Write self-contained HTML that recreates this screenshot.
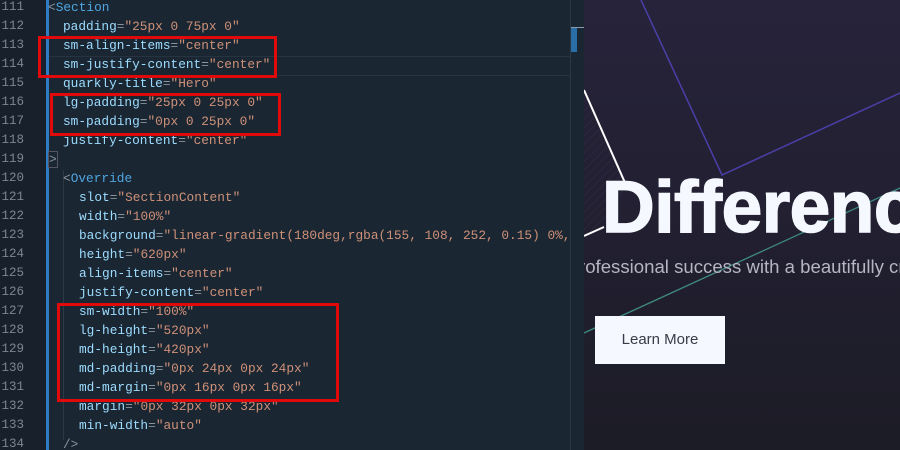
<!DOCTYPE html>
<html><head><style>
body{margin:0;width:900px;height:450px;overflow:hidden;background:#1b2633;position:relative;font-family:"Liberation Mono",monospace}
.gut{position:absolute;left:0;top:0;width:46px;height:450px;background:#18212b}
.bar{position:absolute;left:46px;top:0;width:3px;height:450px;background:#2f7bc4}
.ln{position:absolute;left:0;width:24px;text-align:right;color:#7d8690;font-size:12.5px}
.c{position:absolute;font-size:12.8px;white-space:pre;color:#ce9178}
.a{color:#9cdcfe}.e{color:#8a949e}.t{color:#4fa6e0}
.box{position:absolute;border:3px solid #e00a0a;box-sizing:border-box}
.pv{position:absolute;left:584px;top:0;width:316px;height:450px;background:linear-gradient(180deg,#27233b,#1c1c26);overflow:hidden}
#code{position:absolute;left:0;top:0;width:570px;height:450px;overflow:hidden}
</style></head><body>
<div class="gut"></div><div class="bar"></div>
<div style="position:absolute;left:49px;top:56px;width:521px;height:18px;border-top:1px solid #263340;border-bottom:1px solid #263340"></div>
<div style="position:absolute;left:570px;top:0;width:1px;height:450px;background:#2a3845"></div>
<div style="position:absolute;left:571px;top:27px;width:6px;height:25px;background:#2a6ea8"></div>
<div style="position:absolute;left:571px;top:27px;width:13px;height:1px;background:#8a9bb0"></div>
<div style="position:absolute;left:63px;top:170px;width:1px;height:270px;background:#2c3a48"></div>

<div id="code"></div>
<script>
const L=[
[48,'<span class="e">&lt;</span><span class="t">Section</span>'],
[63,'<span class="a">padding</span><span class="e">=</span>"25px 0 75px 0"'],
[63,'<span class="a">sm-align-items</span><span class="e">=</span>"center"'],
[63,'<span class="a">sm-justify-content</span><span class="e">=</span>"center"'],
[63,'<span class="a">quarkly-title</span><span class="e">=</span>"Hero"'],
[63,'<span class="a">lg-padding</span><span class="e">=</span>"25px 0 25px 0"'],
[63,'<span class="a">sm-padding</span><span class="e">=</span>"0px 0 25px 0"'],
[63,'<span class="a">justify-content</span><span class="e">=</span>"center"'],
[48,'<span class="e" style="border:1px solid #556;">&gt;</span>'],
[63,'<span class="e">&lt;</span><span class="t">Override</span>'],
[79,'<span class="a">slot</span><span class="e">=</span>"SectionContent"'],
[79,'<span class="a">width</span><span class="e">=</span>"100%"'],
[79,'<span class="a">background</span><span class="e">=</span>"linear-gradient(180deg,rgba(155, 108, 252, 0.15) 0%,tr'],
[79,'<span class="a">height</span><span class="e">=</span>"620px"'],
[79,'<span class="a">align-items</span><span class="e">=</span>"center"'],
[79,'<span class="a">justify-content</span><span class="e">=</span>"center"'],
[79,'<span class="a">sm-width</span><span class="e">=</span>"100%"'],
[79,'<span class="a">lg-height</span><span class="e">=</span>"520px"'],
[79,'<span class="a">md-height</span><span class="e">=</span>"420px"'],
[79,'<span class="a">md-padding</span><span class="e">=</span>"0px 24px 0px 24px"'],
[79,'<span class="a">md-margin</span><span class="e">=</span>"0px 16px 0px 16px"'],
[79,'<span class="a">margin</span><span class="e">=</span>"0px 32px 0px 32px"'],
[79,'<span class="a">min-width</span><span class="e">=</span>"auto"'],
[63,'<span class="e">/&gt;</span>']];
let h='';L.forEach((l,i)=>{const y=i*19;h+=`<div class="ln" style="top:${y}px">${111+i}</div><div class="c" style="left:${l[0]}px;top:${y}px">${l[1]}</div>`});
document.getElementById('code').innerHTML=h;
</script>
<div class="box" style="left:38px;top:36px;width:239px;height:42px"></div>
<div class="box" style="left:50px;top:93px;width:231px;height:43px"></div>
<div class="box" style="left:57px;top:303px;width:282px;height:99px"></div>

<div class="pv">
<svg width="316" height="450" style="position:absolute;left:0;top:0">
<defs><pattern id="h" width="6" height="6" patternUnits="userSpaceOnUse" patternTransform="rotate(45)"><line x1="0" y1="0" x2="0" y2="6" stroke="#3a3550" stroke-width="1"/></pattern></defs>
<polygon points="0,90 42,185 20,227 0,236" fill="url(#h)" opacity="0.6"/>
<polyline points="0,90 42,185" stroke="#fff" stroke-width="2" fill="none"/>
<polyline points="0,236 20,227" stroke="#fff" stroke-width="2" fill="none"/>
<polyline points="57,0 138,175 316,93" stroke="#4a3fa8" stroke-width="1.5" fill="none"/>
<line x1="0" y1="333" x2="316" y2="188" stroke="#3f8a82" stroke-width="1.3"/>
</svg>
<div style="position:absolute;left:18px;top:166px;font:bold 73px 'Liberation Sans',sans-serif;color:#f6f8ff;white-space:nowrap;letter-spacing:-0.5px;-webkit-text-stroke:1.5px #f6f8ff">Differenc</div>
<div style="position:absolute;left:-5px;top:256px;font:18.6px 'Liberation Sans',sans-serif;color:#b5b5c3;white-space:nowrap">rofessional success with a beautifully cr</div>
<div style="position:absolute;left:11px;top:316px;width:130px;height:48px;background:#f6f8ff;color:#3a3a48;font:15px 'Liberation Sans',sans-serif;text-align:center;line-height:48px">Learn More</div>
</div>
</body></html>
